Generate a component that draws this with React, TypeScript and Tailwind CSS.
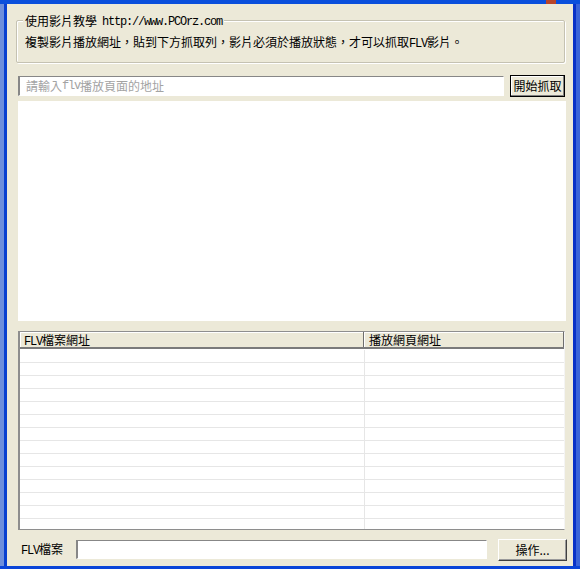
import React from 'react';

const cjk = { fontFamily: '"Noto Sans CJK TC", "Noto Sans CJK SC", sans-serif' };
const mono = { fontFamily: '"Liberation Mono", "Noto Sans CJK TC", monospace' };

const rows = Array.from({ length: 14 });

const Latin: React.FC<{ children: React.ReactNode }> = ({ children }) => (
  <span className="text-[12px] tracking-[-1.2px]" style={mono}>{children}</span>
);

const App: React.FC = () => {
  return (
    <div className="w-[580px] h-[569px] flex flex-col bg-[#2a5bd0] overflow-hidden text-[12px] text-black" style={cjk}>
      {/* title bar remnant */}
      <div className="h-[4px] flex shrink-0 bg-[#0a4fdc]">
        <div className="w-[546px]" />
        <div className="w-[10px] bg-[#b8452a]" />
      </div>

      <div className="flex flex-1 min-h-0">
        {/* left edge */}
        <div className="w-[4px] bg-[#6d8fdc]" />
        <div className="w-[3px] bg-[#0840d0]" />

        {/* dialog face */}
        <div className="w-[566px] bg-[#ece9d8] flex flex-col pl-[11px]">
          {/* group box */}
          <div className="relative mt-[16px] w-[549px] h-[43px] -ml-[2px] border border-[#c5c2b2] rounded-[2px] shadow-[1px_1px_0_#fff,inset_1px_1px_0_#fff]">
            <div className="absolute -top-[8px] left-[6px] bg-[#ece9d8] px-[2px] leading-[14px] flex items-center">
              <span>使用影片教學</span>
              <span className="ml-[5px]"><Latin>http://www.PCOrz.com</Latin></span>
            </div>
            <div className="pl-[8px] pt-[13px] leading-[16px] whitespace-nowrap">
              複製影片播放網址，貼到下方抓取列，影片必須於播放狀態，才可以抓取<Latin>FLV</Latin>影片。
            </div>
          </div>

          {/* url row */}
          <div className="mt-[12px] flex items-center h-[22px]">
            <div className="w-[486px] h-[20px] bg-white border-l-2 border-t border-[#878787] border-r border-b border-r-white border-b-white flex items-center pl-[6px] text-[#a3a3a3] leading-none">
              請輸入<span className="text-[12px] tracking-[-1.2px]" style={mono}>flv</span>播放頁面的地址
            </div>
            <button className="ml-[6px] w-[55px] h-[22px] bg-[#ece9d8] border border-black shadow-[inset_-1px_-1px_0_#808080,inset_1px_1px_0_#fff] text-[12px] leading-none">
              開始抓取
            </button>
          </div>

          {/* browser area */}
          <div className="mt-[4px] w-[548px] h-[220px] bg-white" />

          {/* list view */}
          <div className="mt-[10px] w-[547px] h-[199px] bg-white border-l-2 border-t border-b border-[#8e8e8e] border-r border-r-[#f4f4f4] flex flex-col overflow-hidden">
            <div className="flex h-[17px] shrink-0 bg-[#ece9d8] border-b-2 border-[#7a7a7a] leading-[15px]">
              <div className="w-[344px] pl-[4px] border-r border-[#6e6e6e] shadow-[inset_1px_1px_0_#fff]">
                <Latin>FLV</Latin>檔案網址
              </div>
              <div className="flex-1 pl-[5px] border-r border-[#6e6e6e] shadow-[inset_1px_1px_0_#fff]">播放網頁網址</div>
            </div>
            <div className="flex-1 flex flex-col pt-[1px]">
              {rows.map((_, i) => (
                <div key={i} className="flex h-[13px] shrink-0 border-b border-[#e6e6e6]">
                  <div className="w-[345px] border-r border-[#e6e6e6]" />
                  <div className="flex-1" />
                </div>
              ))}
            </div>
          </div>

          {/* bottom row */}
          <div className="mt-[9px] flex items-center h-[21px]">
            <div className="w-[58px] pl-[3px] leading-none">
              <Latin>FLV</Latin>檔案
            </div>
            <div className="w-[411px] h-[19px] bg-white border-l-2 border-t border-[#878787] border-r border-b border-r-white border-b-white" />
            <button className="ml-[11px] w-[69px] h-[22px] bg-[#ece9d8] border-t border-l border-white border-r border-b border-r-[#404040] border-b-[#404040] shadow-[inset_-1px_-1px_0_#9a9a9a] text-[12px] leading-none">
              操作...
            </button>
          </div>
        </div>

        {/* right edge */}
        <div className="w-[3px] bg-[#0831c8]" />
        <div className="w-[4px] bg-[#3a64d8]" />
      </div>

      <div className="h-[3px] shrink-0 bg-[#0a45d8]" />
    </div>
  );
};

export default App;
